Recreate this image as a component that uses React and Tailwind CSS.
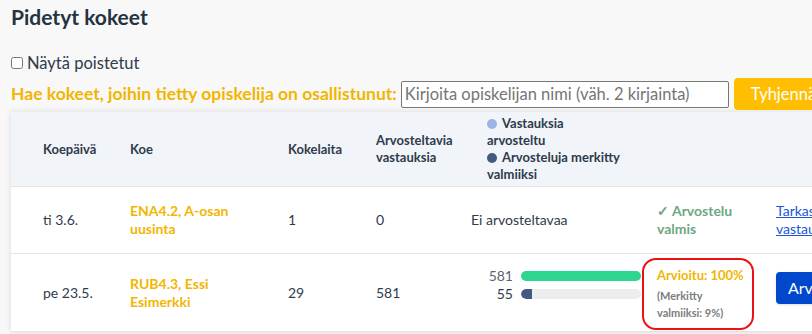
import React from 'react';

const FONT = { fontFamily: 'Lato, "Noto Sans", sans-serif' };

const COLS = 'grid grid-cols-[32px_87px_158px_88px_95px_186px_119px_1fr]';

function Legend() {
  return (
    <div className="pl-4 text-[13px] font-bold leading-[17px] text-[#2f3b4c]">
      <div className="flex items-center gap-[5px]">
        <span className="inline-block w-[10px] h-[10px] rounded-full bg-[#9db4e6]" />
        Vastauksia
      </div>
      <div>arvosteltu</div>
      <div className="flex items-center gap-[5px] whitespace-nowrap">
        <span className="inline-block w-[10px] h-[10px] rounded-full bg-[#455a7f]" />
        Arvosteluja merkitty
      </div>
      <div>valmiiksi</div>
    </div>
  );
}

function Bars() {
  return (
    <div className="flex flex-col gap-[6px] pb-[16px] text-[14px] leading-[12px]">
      <div className="flex items-center gap-2">
        <span className="w-[42px] text-right text-[#5b6470]">581</span>
        <div className="w-[120px] h-[10px] rounded-full bg-[#2dd58f]" />
      </div>
      <div className="flex items-center gap-2">
        <span className="w-[42px] text-right text-[#2f3b4c]">55</span>
        <div className="w-[120px] h-[10px] rounded-full bg-[#ededed] overflow-hidden">
          <div className="h-full bg-[#445a80] rounded-l-full" style={{ width: '9%' }} />
        </div>
      </div>
    </div>
  );
}

export default function App() {
  return (
    <div className="w-[812px] h-[334px] overflow-hidden bg-[#f8f8f8] text-[#2f3b4c]" style={FONT}>
      <div className="pl-[11px] pt-[4px] w-[840px]">
        <h1 className="text-[21px] font-bold text-[#263340] leading-[26px]">Pidetyt kokeet</h1>

        <label className="mt-[23px] flex items-center gap-[4px] text-[16.5px] leading-[20px]">
          <input type="checkbox" className="w-[12px] h-[12px] m-0" />
          Näytä poistetut
        </label>

        <div className="mt-[5px] flex items-center whitespace-nowrap">
          <span className="text-[17.5px] font-bold text-[#f2b600]">
            Hae kokeet, joihin tietty opiskelija on osallistunut:
          </span>
          <input
            type="text"
            placeholder="Kirjoita opiskelijan nimi (väh. 2 kirjainta)"
            className="ml-[4px] shrink-0 w-[328px] h-[27px] px-[3px] bg-white border border-[#767676] rounded-[2px] text-[16.5px] placeholder:text-[#757575]"
          />
          <button className="ml-[5px] shrink-0 h-[32px] px-[17px] rounded-[4px] bg-[#ffbf00] text-white text-[16.5px]">
            Tyhjennä
          </button>
        </div>

        <div className="mt-[2px] bg-white shadow-[0_0_6px_rgba(0,0,0,0.12)]">
          <div className={`${COLS} h-[75px] items-center bg-[#f1f4f8] border-b border-[#e3e3e3] text-[13px] font-bold leading-[17px] text-[#2f3b4c]`}>
            <div />
            <div>Koepäivä</div>
            <div>Koe</div>
            <div>Kokelaita</div>
            <div>Arvosteltavia<br />vastauksia</div>
            <Legend />
            <div />
            <div />
          </div>

          <div className={`${COLS} h-[67px] items-center border-b border-[#e3e3e3] text-[14px] leading-[18px]`}>
            <div />
            <div>ti 3.6.</div>
            <div className="font-bold text-[#f2b600] pr-4">ENA4.2, A-osan uusinta</div>
            <div>1</div>
            <div>0</div>
            <div>Ei arvosteltavaa</div>
            <div className="font-bold text-[#6fa783]">✓ Arvostelu<br />valmis</div>
            <div className="text-[#1a56d6] underline whitespace-nowrap">Tarkasta<br />vastaukset</div>
          </div>

          <div className={`${COLS} h-[78px] items-center border-b border-[#e3e3e3] text-[14px] leading-[18px]`}>
            <div />
            <div>pe 23.5.</div>
            <div className="font-bold text-[#f2b600] pr-4">RUB4.3, Essi Esimerkki</div>
            <div>29</div>
            <div>581</div>
            <Bars />
            <div className="relative h-full flex flex-col justify-center">
              <div className="absolute left-[-15px] top-[4px] w-[112px] h-[72px] border-2 border-[#ee1111] rounded-[14px]" />
              <div className="font-bold text-[13px] text-[#f2b600] leading-[20px] whitespace-nowrap">Arvioitu: 100%</div>
              <div className="font-bold text-[11px] text-[#7c7c7c] leading-[17px] mt-[2px]">(Merkitty<br />valmiiksi: 9%)</div>
            </div>
            <div className="pb-[10px]">
              <button className="h-[32px] px-[12px] rounded-[4px] bg-[#0047cc] text-white text-[16px] whitespace-nowrap shadow">
                Arvioi
              </button>
            </div>
          </div>
        </div>
      </div>
    </div>
  );
}
